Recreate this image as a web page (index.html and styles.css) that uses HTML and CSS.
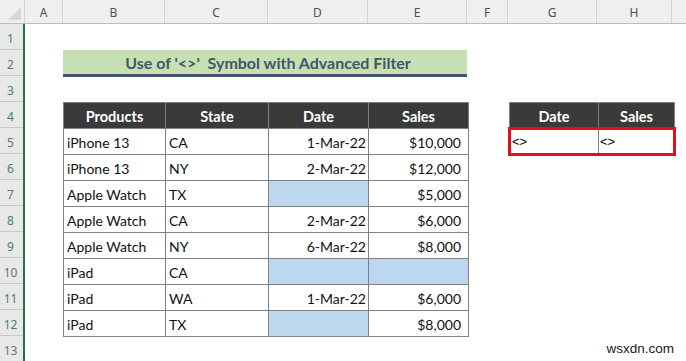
FILE: index.html
```html
<!DOCTYPE html>
<html>
<head>
<meta charset="utf-8">
<link rel="stylesheet" href="styles.css">
</head>
<body>
<div class="sheet">
  <div class="colhdr">
    <div class="corner"><span class="tri"></span></div>
    <div class="ch w-a">A</div>
    <div class="ch w-b">B</div>
    <div class="ch w-c">C</div>
    <div class="ch w-d">D</div>
    <div class="ch w-e">E</div>
    <div class="ch w-f">F</div>
    <div class="ch w-g">G</div>
    <div class="ch w-h">H</div>
    <div class="ch w-i"></div>
  </div>
  <div class="main">
    <div class="rowhdr">
      <div class="rh">1</div><div class="rh">2</div><div class="rh">3</div><div class="rh">4</div>
      <div class="rh">5</div><div class="rh">6</div><div class="rh">7</div><div class="rh">8</div>
      <div class="rh">9</div><div class="rh">10</div><div class="rh">11</div><div class="rh">12</div>
      <div class="rh">13</div>
    </div>
    <div class="cells">
      <div class="title">Use of '&lt;&gt;'&nbsp; Symbol with Advanced Filter</div>
      <table class="data">
        <colgroup><col class="cb"><col class="cc"><col class="cd"><col class="ce"></colgroup>
        <thead>
          <tr><th>Products</th><th>State</th><th>Date</th><th>Sales</th></tr>
        </thead>
        <tbody>
          <tr><td>iPhone 13</td><td>CA</td><td class="num">1-Mar-22</td><td class="money">$10,000</td></tr>
          <tr><td>iPhone 13</td><td>NY</td><td class="num">2-Mar-22</td><td class="money">$12,000</td></tr>
          <tr><td>Apple Watch</td><td>TX</td><td class="blank"></td><td class="money">$5,000</td></tr>
          <tr><td>Apple Watch</td><td>CA</td><td class="num">2-Mar-22</td><td class="money">$6,000</td></tr>
          <tr><td>Apple Watch</td><td>NY</td><td class="num">6-Mar-22</td><td class="money">$8,000</td></tr>
          <tr><td>iPad</td><td>CA</td><td class="blank"></td><td class="blank"></td></tr>
          <tr><td>iPad</td><td>WA</td><td class="num">1-Mar-22</td><td class="money">$6,000</td></tr>
          <tr><td>iPad</td><td>TX</td><td class="blank"></td><td class="money">$8,000</td></tr>
        </tbody>
      </table>
      <table class="crit">
        <colgroup><col class="cg"><col class="chh"></colgroup>
        <thead>
          <tr><th>Date</th><th>Sales</th></tr>
        </thead>
        <tbody>
          <tr><td class="op first">&lt;&gt;</td><td class="op last">&lt;&gt;</td></tr>
        </tbody>
      </table>
    </div>
  </div>
  <div class="wm">wsxdn.com</div>
</div>
</body>
</html>
```

FILE: styles.css
```css
* { box-sizing: border-box; }
html, body { margin: 0; padding: 0; background: #fff; }
body { width: 686px; height: 361px; overflow: hidden; font-family: Lato, "Open Sans", sans-serif; }

.sheet { position: relative; width: 686px; height: 361px; overflow: hidden; }

.colhdr {
  display: flex;
  height: 24px;
  background: #efefef;
  border-bottom: 1px solid #bdbdbd;
}
.corner {
  position: relative;
  width: 25px;
  flex: none;
  border-right: 1px solid #d4d4d4;
}
.tri {
  position: absolute;
  right: 3px;
  bottom: 3px;
  width: 0; height: 0;
  border-left: 13px solid transparent;
  border-bottom: 13px solid #d6d6d6;
}
.ch {
  flex: none;
  border-right: 1px solid #d4d4d4;
  font-family: "Noto Sans", "Open Sans", sans-serif;
  font-size: 12px;
  color: #505050;
  display: flex;
  align-items: center;
  justify-content: center;
  padding-top: 1px;
}
.w-a { width: 38px; }
.w-b { width: 102px; }
.w-c { width: 103px; }
.w-d { width: 100px; }
.w-e { width: 99px; }
.w-f { width: 41px; }
.w-g { width: 89px; }
.w-h { width: 75px; }
.w-i { flex: 1; border-right: none; }

.main { display: flex; }

.rowhdr {
  width: 25px;
  flex: none;
  background: #e8e8e8;
  border-right: 2px solid #217346;
  display: flex;
  flex-direction: column;
}
.rh {
  height: 26px;
  border-bottom: 1px solid #c8c8c8;
  font-family: "Noto Sans", "Open Sans", sans-serif;
  font-size: 12px;
  color: #4d8066;
  display: flex;
  align-items: center;
  justify-content: center;
  padding-top: 3px;
  padding-right: 2px;
}

.cells {
  display: grid;
  grid-template-columns: 38px 102px 103px 100px 99px 41px 89px 75px 1fr;
  grid-template-rows: repeat(13, 26px);
  flex: 1;
}

.title {
  grid-column: 2 / 6;
  grid-row: 2;
  align-self: start;
  height: 27px;
  background: #c6e0b4;
  border-bottom: 3px solid #44546a;
  color: #44546a;
  font-weight: 700;
  font-size: 16px;
  text-align: center;
  line-height: 25px;
  padding-left: 6px;
}

table { border-collapse: collapse; table-layout: fixed; }

.data {
  grid-column: 2 / 6;
  grid-row: 4 / 13;
  width: 405px;
  height: 235px;
}
.cb { width: 102px; }
.cc { width: 103px; }
.cd { width: 100px; }
.ce { width: 100px; }

th, td {
  height: 26px;
  padding: 0;
  border: 1px solid #808080;
  font-size: 14px;
  white-space: nowrap;
  overflow: hidden;
}
th {
  background: #3a3a3a;
  color: #fff;
  font-weight: 700;
  font-size: 14.5px;
  text-align: center;
  padding-top: 2px;
}
td {
  color: #111;
  text-align: left;
  padding-left: 3px;
  padding-top: 2px;
}
td.num { text-align: right; padding-right: 2px; }
td.money { text-align: right; padding-right: 7px; }
td.blank { background: #bdd7ee; }

.crit {
  grid-column: 7 / 9;
  grid-row: 4 / 6;
  width: 165px;
  height: 52px;
}
.cg { width: 89px; }
.chh { width: 76px; }
.crit td.op {
  font-family: "Liberation Sans", Arial, sans-serif;
  font-size: 13px;
  color: #000;
  padding-left: 1px;
  padding-top: 0;
  border-top: 3px solid #e3101c;
  border-bottom: 3px solid #e3101c;
  border-right: 1px solid #808080;
}
.crit td.first { border-left: 3px solid #e3101c; }
.crit td.last { border-right: 3px solid #e3101c; }

.wm {
  position: absolute;
  right: 12px;
  bottom: 5px;
  font-family: "Liberation Sans", Arial, sans-serif;
  font-size: 13.5px;
  color: #1a1a1a;
}
```
